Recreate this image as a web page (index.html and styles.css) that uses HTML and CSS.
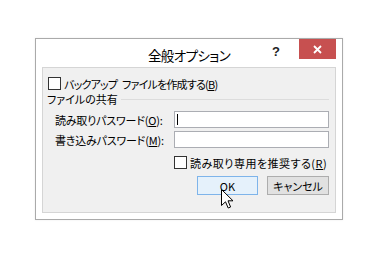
FILE: index.html
```html
<!DOCTYPE html>
<html lang="ja">
<head>
<meta charset="utf-8">
<link rel="stylesheet" href="styles.css">
</head>
<body>
<div class="window">
  <div class="titlebar">
    <div class="spacer"></div>
    <div class="title">全般オプション</div>
    <div class="controls">
      <span class="help">?</span>
      <span class="close">
        <svg width="9" height="9" viewBox="0 0 9 9"><path d="M1 1 L8 8 M8 1 L1 8" stroke="#fff" stroke-width="1.8" fill="none"/></svg>
      </span>
    </div>
  </div>
  <div class="panel">
    <div class="check-row backup"><span class="box"></span><span class="txt">バックアップ<span class="gap"> </span>ファイルを作成する(<u>B</u>)</span></div>
    <div class="group"><span class="txt">ファイルの共有</span><span class="rule"></span></div>
    <div class="field-row first"><span class="label">読み取りパスワード(<u>O</u>):</span><span class="input"><span class="caret"></span></span></div>
    <div class="field-row second"><span class="label">書き込みパスワード(<u>M</u>):</span><span class="input"></span></div>
    <div class="check-row readonly"><span class="box"></span><span class="txt">読み取り専用を推奨する(<u>R</u>)</span></div>
    <div class="buttons"><span class="btn ok">OK</span><span class="btn cancel">キャンセル</span></div>
  </div>
  <svg class="cursor" width="14" height="21" viewBox="0 0 14 21"><path d="M0.5 0.5 L0.5 16.5 L4.5 12.8 L7.2 19 L9.6 18 L7 11.8 L12 11.8 Z" fill="#fff" stroke="#000" stroke-width="1" stroke-linejoin="miter"/></svg>
</div>
</body>
</html>
```
FILE: styles.css
```css
* { box-sizing: border-box; }
html, body { margin: 0; padding: 0; background: #fff; }
body {
  font-family: "Noto Sans CJK JP", "Noto Sans", sans-serif;
  color: #000;
  width: 380px;
  height: 259px;
  overflow: hidden;
}
.window {
  position: relative;
  margin: 38px 0 0 35px;
  width: 308px;
  height: 182px;
  border: 1px solid #aaaaaa;
  background: #fff;
  box-shadow: 0 0 2px rgba(0,0,0,0.08);
}
.titlebar {
  display: grid;
  grid-template-columns: 1fr auto 1fr;
  height: 28px;
}
.title {
  font-size: 13.5px;
  letter-spacing: -0.6px;
  font-feature-settings: "palt";
  line-height: 28px;
  padding-top: 2px;
  color: #000;
}
.controls {
  display: flex;
  justify-content: flex-end;
  align-items: flex-start;
  padding-right: 6px;
}
.help {
  font-family: "Liberation Sans", sans-serif;
  font-weight: bold;
  font-size: 13px;
  line-height: 14px;
  margin-top: 6px;
  margin-right: 19px;
  color: #222;
}
.close {
  width: 37px;
  height: 20px;
  background: #c75050;
  display: flex;
  align-items: center;
  justify-content: center;
}
.panel {
  margin: 0 6px;
  height: 146px;
  border: 1px solid #d5d5d5;
  background: #f0f0f0;
  padding: 0 6px 0 0;
  font-size: 11px;
  letter-spacing: 0;
  font-feature-settings: "palt";
}
.txt, .label { line-height: 14px; white-space: pre; }
u { text-decoration: underline; text-underline-offset: 1px; }
.check-row { display: flex; align-items: center; }
.box {
  width: 13px;
  height: 13px;
  border: 1px solid #333;
  background: #fff;
  margin-right: 3px;
  flex: none;
}
.backup { margin-top: 9px; padding-left: 5px; height: 13px; }
.backup .txt { letter-spacing: -0.8px; }
.backup .gap { display: inline-block; width: 5px; }
.group { display: flex; align-items: center; margin-top: 2px; padding-left: 4px; height: 14px; }
.rule { flex: 1; height: 1px; background: #dcdcdc; margin: 1px 0 0 3px; }
.field-row { display: flex; align-items: center; padding-left: 12px; height: 17px; }
.field-row .label { letter-spacing: -0.2px; }
.field-row.first { margin-top: 5px; }
.field-row.second { margin-top: 3px; }
.input {
  margin-left: auto;
  width: 155px;
  height: 17px;
  border: 1px solid #abadb3;
  background: #fff;
  position: relative;
}
.caret {
  position: absolute;
  left: 2px;
  top: 2px;
  width: 1px;
  height: 11px;
  background: #000;
}
.readonly { margin-top: 8px; padding-left: 131px; height: 13px; }
.readonly .txt { letter-spacing: 0.5px; }
.buttons {
  display: flex;
  justify-content: flex-end;
  gap: 9px;
  margin-top: 7px;
}
.btn {
  height: 19px;
  display: flex;
  align-items: center;
  justify-content: center;
  line-height: 14px;
  border: 1px solid #adadad;
  background: #e1e1e1;
}
.ok { width: 61px; background: #e5f1fb; border-color: #7eb4ea; }
.cancel { width: 62px; }
.cursor {
  position: absolute;
  left: 185px;
  top: 150px;
}
```
